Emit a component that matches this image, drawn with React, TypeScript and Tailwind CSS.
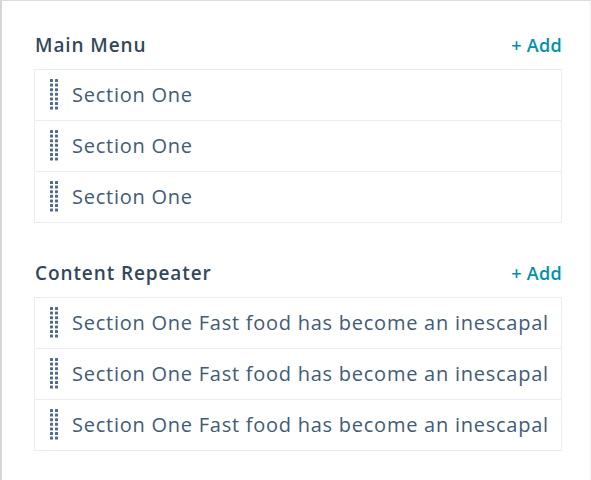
import React from 'react'

const menuItems = ['Section One', 'Section One', 'Section One']
const repeaterItems = [
  'Section One Fast food has become an inescapal',
  'Section One Fast food has become an inescapal',
  'Section One Fast food has become an inescapal',
]

function DragHandle() {
  const rows = Array.from({ length: 7 })
  return (
    <svg width="8" height="32" viewBox="0 0 8 32" className="shrink-0">
      {rows.map((_, i) => (
        <g key={i} fill="#4f6a8c">
          <rect x="0" y={i * 4.6} width="3" height="3" rx="0.6" />
          <rect x="5" y={i * 4.6} width="3" height="3" rx="0.6" />
        </g>
      ))}
    </svg>
  )
}

function Section({ title, items, className }: { title: string; items: string[]; className?: string }) {
  return (
    <div className={'w-[528px] ' + (className ?? '')}>
      <div className="flex h-[24px] items-center justify-between mb-[12px] pl-[1px]">
        <h2 className="text-[19px] font-semibold tracking-[0.9px] text-[#33475b]">{title}</h2>
        <button className="text-[18px] font-semibold tracking-[0.3px] text-[#0091ae]">+ Add</button>
      </div>
      <ul className="w-[528px] border border-[#eaeef4] bg-white">
        {items.map((item, i) => (
          <li
            key={i}
            className="flex h-[51px] items-center gap-[14px] overflow-hidden border-b border-[#eaeef4] pl-[15px] pr-[12px] last:h-[50px] last:border-b-0"
          >
            <DragHandle />
            <span className="overflow-hidden whitespace-nowrap text-[20px] tracking-[0.75px] text-[#425b76]">{item}</span>
          </li>
        ))}
      </ul>
    </div>
  )
}

export default function App() {
  return (
    <div
      className="h-[480px] w-[591px] overflow-hidden border-l-2 border-t border-r border-l-[#d6d6d6] border-t-[#dcdcdc] border-r-[#f0f0f0] bg-white pl-[32px] pt-[32px]"
      style={{ fontFamily: '"Open Sans", "Noto Sans", sans-serif' }}
    >
      <Section title="Main Menu" items={menuItems} />
      <Section title="Content Repeater" items={repeaterItems} className="mt-[38px]" />
    </div>
  )
}
